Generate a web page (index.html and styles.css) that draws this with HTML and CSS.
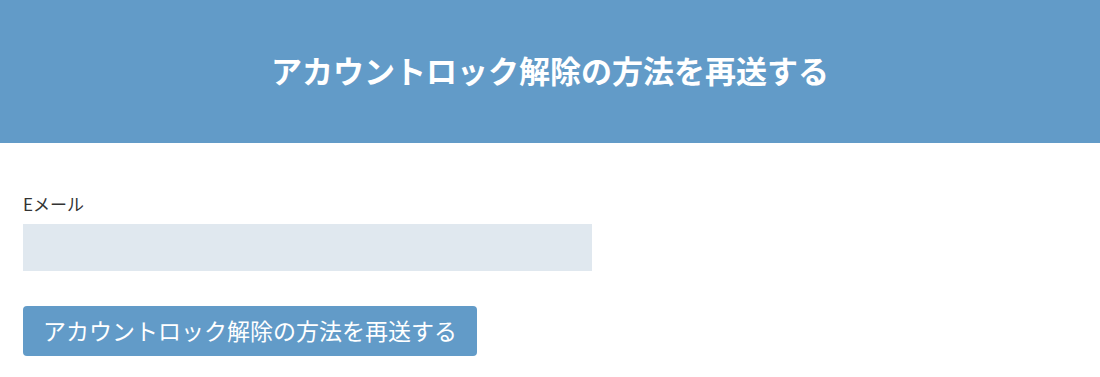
FILE: index.html
```html
<!DOCTYPE html>
<html lang="ja">
<head>
<meta charset="utf-8">
<title>アカウントロック解除の方法を再送する</title>
<link rel="stylesheet" href="styles.css">
</head>
<body>
<header class="hero">
  <h1 class="hero-title">アカウントロック解除の方法を再送する</h1>
</header>
<main class="content">
  <form class="form">
    <label class="label" for="email">Eメール</label>
    <input class="input" id="email" type="email">
    <button class="btn" type="button">アカウントロック解除の方法を再送する</button>
  </form>
</main>
</body>
</html>
```
FILE: styles.css
```css
html, body {
  margin: 0;
  padding: 0;
  background: #ffffff;
  font-family: "Noto Sans CJK JP", "Noto Sans", sans-serif;
  color: #333333;
}
.hero {
  height: 143px;
  background: #629bc8;
  display: flex;
  align-items: center;
  justify-content: center;
}
.hero-title {
  margin: 0;
  color: #ffffff;
  font-size: 31px;
  font-weight: 700;
  line-height: 1.2;
  padding-bottom: 4px;
}
.content {
  padding: 49px 23px 0;
}
.form {
  display: flex;
  flex-direction: column;
  align-items: flex-start;
}
.label {
  font-size: 17px;
  line-height: 24px;
  color: #333333;
}
.input {
  margin-top: 8px;
  width: 569px;
  height: 47px;
  box-sizing: border-box;
  border: none;
  background: #e0e8ef;
  padding: 0 12px;
  font-size: 16px;
  font-family: inherit;
}
.btn {
  margin-top: 35px;
  width: 454px;
  height: 50px;
  box-sizing: border-box;
  border: none;
  border-radius: 4px;
  background: #629bc8;
  color: #ffffff;
  font-family: inherit;
  font-size: 23px;
  line-height: 1;
  padding: 0 0 2px;
  cursor: pointer;
}
```
